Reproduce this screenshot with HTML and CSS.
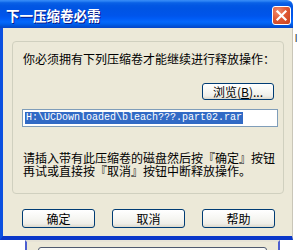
FILE: index.html
```html
<!DOCTYPE html>
<html lang="zh-CN">
<head>
<meta charset="utf-8">
<title>下一压缩卷必需</title>
<link rel="stylesheet" href="styles.css">
</head>
<body>
<div class="screen">
  <div class="top">
    <div class="window">
      <div class="titlebar">
        <span class="title">下一压缩卷必需</span>
        <span class="close" aria-label="关闭">
          <svg width="17" height="17" viewBox="0 0 17 17"><path d="M4.5 4.5 L12.5 12.5 M12.5 4.5 L4.5 12.5" stroke="#fff" stroke-width="2.2" stroke-linecap="square" fill="none"/></svg>
        </span>
      </div>
      <div class="client">
        <div class="group">
          <p class="msg">你必须拥有下列压缩卷才能继续进行释放操作：</p>
          <div class="browse-row"><span class="btn browse">浏览(<u>B</u>)...</span></div>
          <div class="path"><span class="sel">H:\UCDownloaded\bleach???.part02.rar</span></div>
          <p class="hint">请插入带有此压缩卷的磁盘然后按『确定』按钮<br>再试或直接按『取消』按钮中断释放操作。</p>
        </div>
        <div class="buttons">
          <span class="btn act">确定</span>
          <span class="btn act">取消</span>
          <span class="btn act">帮助</span>
        </div>
      </div>
    </div>
    <div class="side"><span class="peek">l</span></div>
  </div>
  <div class="below">
    <div class="win2"><div class="box2"></div></div>
  </div>
</div>
</body>
</html>
```

FILE: styles.css
```css
html, body {
  margin: 0;
  padding: 0;
  background: #ffffff;
}
.screen {
  width: 299px;
  height: 250px;
  overflow: hidden;
  display: flex;
  flex-direction: column;
  font-family: "Noto Sans CJK SC", "Liberation Sans", sans-serif;
  font-size: 12px;
  color: #000;
}
.top {
  display: flex;
  height: 240px;
}
.window {
  width: 293px;
  height: 240px;
  display: flex;
  flex-direction: column;
}
.titlebar {
  height: 28px;
  box-sizing: border-box;
  display: flex;
  justify-content: space-between;
  align-items: flex-start;
  padding: 0 2px 0 6px;
  border-top-right-radius: 6px;
  background: linear-gradient(to bottom, #3a8cf6 0%, #2a82f4 4%, #0a61e6 10%, #0257e3 20%, #0054e3 30%, #0055eb 56%, #005bf5 66%, #0468fb 78%, #0060ee 86%, #0052d6 93%, #0645c8 100%);
}
.title {
  color: #fff;
  font-weight: bold;
  font-size: 13.5px;
  line-height: 16px;
  margin-top: 7px;
  text-shadow: 1px 1px 0 #0a1a8a;
}
.close {
  width: 19px;
  height: 19px;
  box-sizing: border-box;
  margin-top: 6px;
  border: 1px solid #fff;
  border-radius: 3px;
  display: flex;
  align-items: center;
  justify-content: center;
  background: radial-gradient(circle at 30% 25%, #f08c6e 0%, #e05a36 45%, #c8401c 100%);
}
.close svg {
  display: block;
}
.client {
  flex: 1;
  background: #ece9d8;
  border-left: 3px solid #0b50e0;
  border-right: 1px solid #c9c6b8;
  border-bottom: 4px solid #0a37c9;
  display: flex;
  flex-direction: column;
}
.group {
  margin: 13px 0 0 9px;
  width: 272px;
  height: 153px;
  box-sizing: border-box;
  border: 1px solid #d0d0bf;
  border-radius: 4px;
  padding: 10px 0 0 10px;
  display: flex;
  flex-direction: column;
}
.msg {
  margin: 0;
  line-height: 13px;
  white-space: nowrap;
}
.browse-row {
  display: flex;
  margin-top: 18px;
  padding-left: 179px;
}
.btn {
  box-sizing: border-box;
  display: flex;
  align-items: center;
  justify-content: center;
  border: 1px solid #003c74;
  border-radius: 3px;
  background: linear-gradient(to bottom, #ffffff 0%, #f6f6f2 50%, #efeee8 80%, #dcd8cc 100%);
  line-height: 12px;
  white-space: nowrap;
}
.browse {
  width: 72px;
  height: 17px;
  font-size: 12px;
}
.path {
  margin: 9px 0 0 -1px;
  width: 256px;
  height: 18px;
  box-sizing: border-box;
  border: 1px solid #7f9db9;
  background: #fff;
  display: flex;
  align-items: center;
  padding-left: 2px;
}
.sel {
  background: #316ac5;
  color: #fff;
  font-family: "Liberation Mono", monospace;
  font-size: 10px;
  line-height: 12px;
  padding: 0 1px;
  white-space: nowrap;
}
.hint {
  margin: 24px 0 0 0;
  line-height: 13px;
  white-space: nowrap;
}
.buttons {
  display: flex;
  gap: 17px;
  margin: 15px 0 0 19px;
}
.act {
  width: 73px;
  height: 19px;
}
.side {
  width: 6px;
  overflow: hidden;
  background: #fff;
}
.peek {
  display: block;
  margin: 33px 0 0 2px;
  font-family: "Liberation Sans", sans-serif;
  font-size: 10px;
  line-height: 11px;
  color: #222;
}
.below {
  height: 10px;
  display: flex;
  background: #fff;
}
.win2 {
  margin-left: 25px;
  width: 255px;
  box-sizing: border-box;
  border-left: 2px solid #4d5fd0;
  border-right: 2px solid #4d5fd0;
  border-top: 2px solid #e6e3d6;
  background: #ece9d8;
  padding: 5px 0 0 11px;
}
.box2 {
  width: 229px;
  height: 20px;
  box-sizing: border-box;
  border: 1px solid #4f5a6e;
  border-radius: 3px;
  background: #fbfbf8;
}
```
